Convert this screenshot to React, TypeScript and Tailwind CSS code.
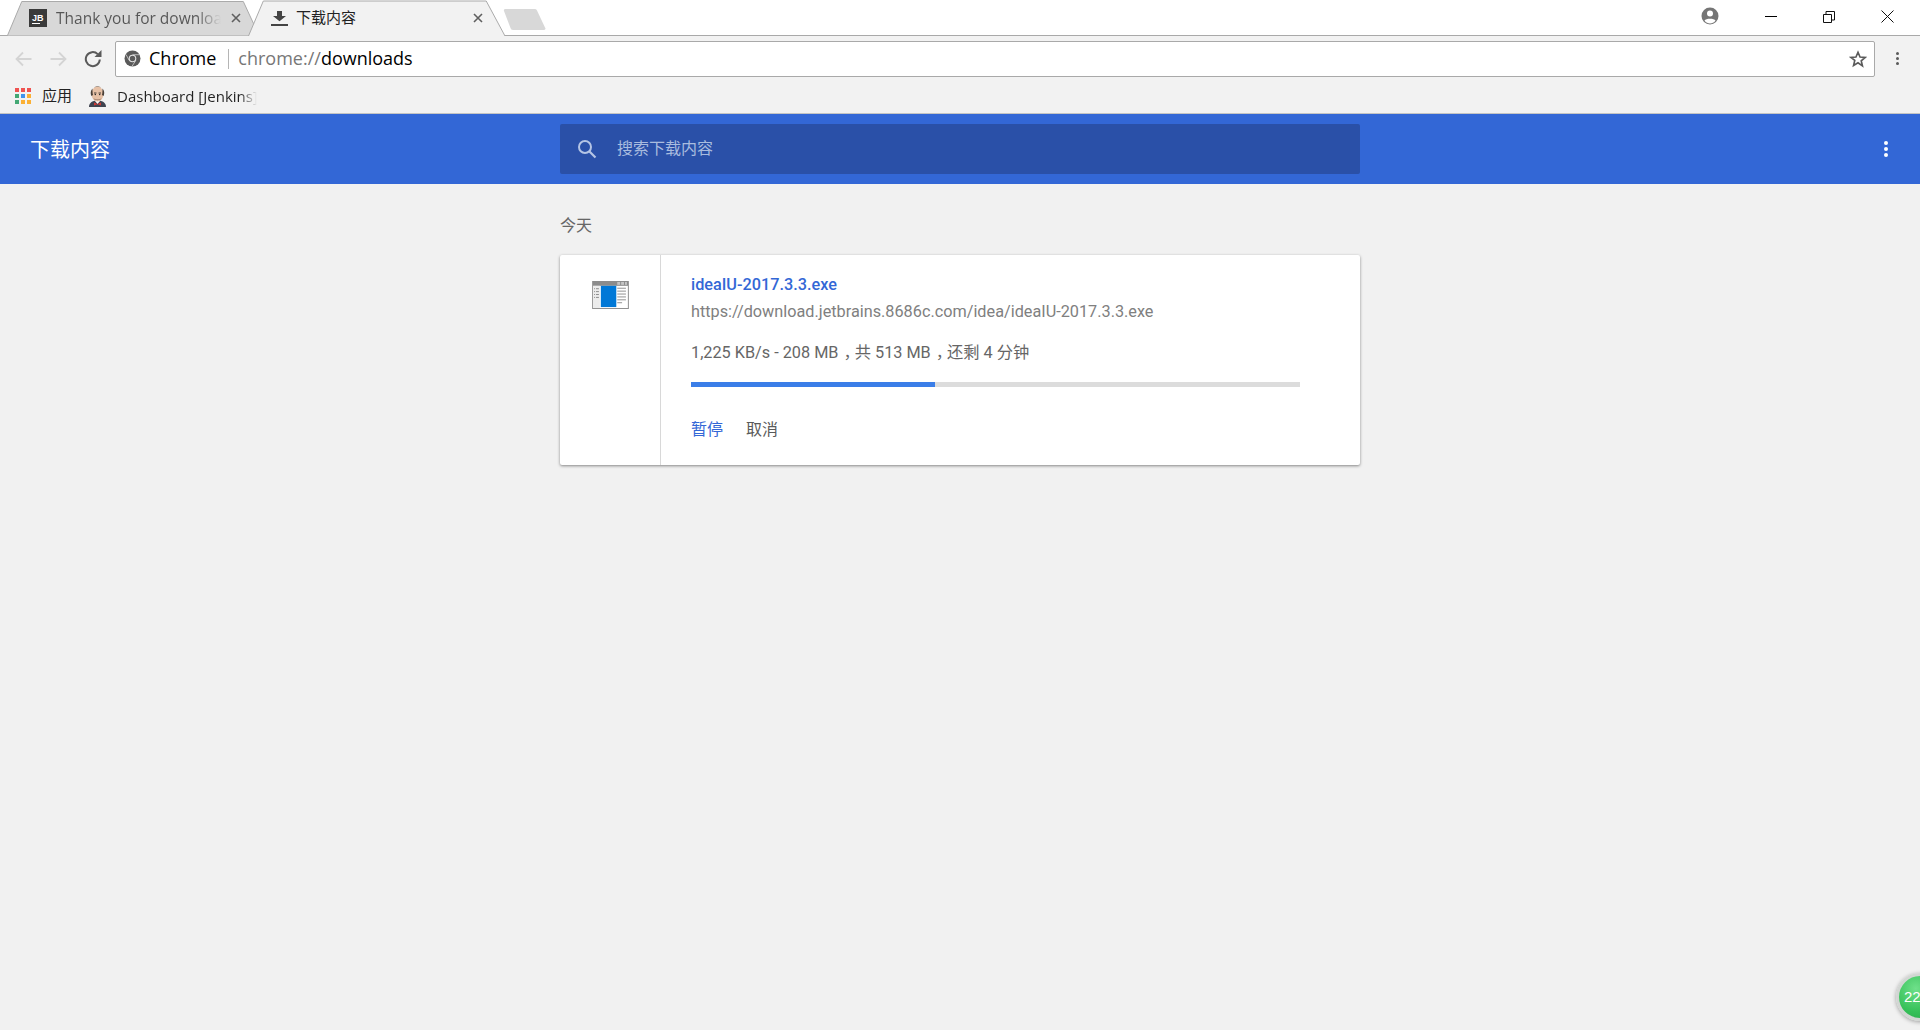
const cjk = "font-['Roboto','Noto_Sans_CJK_SC',sans-serif]";

function TabShape({ fill, stroke, d }: { fill: string; stroke: string; d: string }) {
  return (
    <svg className="absolute inset-0 h-full w-full" viewBox="0 0 260 36" preserveAspectRatio="none">
      <path d={d} fill={fill} stroke={stroke} strokeWidth="1" />
    </svg>
  );
}

function CloseIcon() {
  return (
    <svg width="10" height="10" viewBox="0 0 10 10" className="shrink-0">
      <path d="M1 1l8 8M9 1l-8 8" stroke="#5f5f5f" strokeWidth="1.600" />
    </svg>
  );
}

function JenkinsIcon() {
  return (
    <svg width="19" height="21" viewBox="0 0 19 21">
      <path d="M1 21c0-4 3-6.500 8.500-6.500S18 17 18 21z" fill="#3f4450" />
      <path d="M7 15l2.500 3L12 15z" fill="#fff" />
      <path d="M6 16.500l3.500 1.500 3.500-1.500v3l-3.500-1.200L6 19.500z" fill="#cf3a34" />
      <ellipse cx="9.500" cy="8" rx="6" ry="7.500" fill="#e7c1a6" />
      <path d="M3.500 10C2 7 3 4 4.500 2.500 4.500 5 4.500 7 5 9zM15.500 10c1.500-3 .5-6-1-7.500 0 2.500 0 4.500-.5 6.500z" fill="#4a4038" />
      <path d="M6 1.500C7.500.3 11.500.3 13 1.500 11 .9 8 .9 6 1.500z" fill="#6a5c50" />
      <path d="M5.500 12c2 2 6 2 8 0-.5 3-7.500 3-8 0z" fill="#8a6a58" />
      <path d="M6 7h2.500M10.500 7H13" stroke="#4a4038" strokeWidth="1" />
      <circle cx="7.300" cy="8.500" r="0.700" fill="#222" />
      <circle cx="11.700" cy="8.500" r="0.700" fill="#222" />
    </svg>
  );
}

function FileIcon() {
  return (
    <svg width="37" height="28" viewBox="0 0 38 29">
      <rect x="0" y="0" width="38" height="29" fill="#8c8c8c" />
      <rect x="1" y="5" width="36" height="23" fill="#fff" />
      <rect x="1" y="5" width="7" height="23" fill="#ececec" />
      <rect x="26" y="1" width="3" height="3" fill="#c4c4c4" />
      <rect x="30" y="1" width="3" height="3" fill="#c4c4c4" />
      <rect x="34" y="1" width="2" height="3" fill="#c4c4c4" />
      <rect x="9" y="5" width="16" height="22" fill="#0078d7" />
      <path d="M2 8h1M4 8h3M2 11h1M4 11h3M2 14h1M4 14h3M2 17h1M4 17h3" stroke="#8a8a8a" strokeWidth="1" />
      <path d="M26 7.500h9M26 10.500h9M26 13.500h9M26 16.500h9M26 19.500h9M26 22.500h5" stroke="#8f8f8f" strokeWidth="1" />
    </svg>
  );
}

export default function App() {
  return (
    <div className={`flex h-[1030px] w-full flex-col overflow-hidden bg-[#f1f1f1] ${cjk}`}>
      {/* tab strip */}
      <div className="flex h-[36px] shrink-0 items-stretch border-b border-[#a9a9a9] bg-white pl-[7px]">
        <div className="relative -mb-px flex w-[256px] items-center pl-[22px] pr-[20px]">
          <TabShape fill="#d8d8d8" stroke="#a9a9a9" d="M0.500 35.500L15 1.500H240L256 35.500" />
          <div className="relative flex h-[18px] w-[18px] shrink-0 flex-col justify-center bg-[#3a3a3a] pl-[3px] font-['Liberation_Sans',sans-serif] text-[9px] font-bold leading-[10px] text-white">
            JB
            <div className="h-px w-[8px] bg-white" />
          </div>
          <span className="relative ml-[9px] mt-[2px] w-[165px] overflow-hidden whitespace-nowrap bg-gradient-to-r from-[#555] from-85% to-transparent bg-clip-text font-['Open_Sans',sans-serif] text-[15.500px] text-transparent">
            Thank you for downloa
          </span>
          <span className="relative ml-[10px]"><CloseIcon /></span>
        </div>
        <div className="relative z-10 -mb-px -ml-[15px] flex w-[257px] items-center pl-[23px]">
          <TabShape fill="#f2f2f2" stroke="#a9a9a9" d="M0.500 36L15.500 1H241L260 36" />
          <svg width="17" height="15" viewBox="0 0 17 15" className="relative shrink-0">
            <path d="M6 0h5v6h4l-6.500 6L2 6h4z" fill="#444" transform="translate(0 -0.500) scale(1 0.900)" />
            <rect x="0" y="13" width="17" height="2" fill="#444" />
          </svg>
          <span className="relative ml-[8px] w-[174px] whitespace-nowrap text-[15px] text-[#222]">下载内容</span>
          <span className="relative ml-[3px]"><CloseIcon /></span>
        </div>
        <svg width="46" height="24" viewBox="0 0 46 24" className="mt-[8px] -ml-[3px] shrink-0">
          <path d="M3 1h30a2 2 0 0 1 2 1.500l8 17a1.500 1.500 0 0 1-1.500 2.500H11a2.500 2.500 0 0 1-2.500-2L2 3a1.500 1.500 0 0 1 1-2z" fill="#d8d8d8" />
        </svg>
        <div className="ml-auto flex items-center pb-[2px] pr-[3px]">
          <svg width="18" height="18" viewBox="0 0 18 18" className="mb-[2px] mr-[23px]">
            <circle cx="9" cy="9" r="8.500" fill="#757575" />
            <circle cx="9" cy="6.500" r="3" fill="#fff" />
            <path d="M3.500 13.500C5 11 13 11 14.500 13.500 13 15.700 11 16.500 9 16.500S5 15.700 3.500 13.500z" fill="#fff" />
          </svg>
          <div className="flex h-full w-[58px] items-center justify-center">
            <div className="h-px w-[12px] bg-black" />
          </div>
          <div className="flex h-full w-[58px] items-center justify-center">
            <svg width="12" height="12" viewBox="0 0 12 12">
              <path d="M.5 3.500h8v8h-8zM3 3.500V.5h8.500V9h-3" fill="none" stroke="#111" />
            </svg>
          </div>
          <div className="flex h-full w-[59px] items-center justify-center">
            <svg width="13" height="13" viewBox="0 0 13 13">
              <path d="M.5.500l12 12M12.500.5l-12 12" stroke="#111" />
            </svg>
          </div>
        </div>
      </div>

      {/* toolbar */}
      <div className="flex h-[45px] shrink-0 items-center bg-[#f2f2f2] pl-[15px]">
        <svg width="17" height="16" viewBox="0 0 17 16" className="mr-[18px]">
          <path d="M16.500 8H2M8 1.500L1.500 8 8 14.500" fill="none" stroke="#d4d4d4" strokeWidth="1.800" />
        </svg>
        <svg width="17" height="16" viewBox="0 0 17 16" className="mr-[17px]">
          <path d="M.5 8H15M9 1.500L15.500 8 9 14.500" fill="none" stroke="#d4d4d4" strokeWidth="1.800" />
        </svg>
        <svg width="18" height="18" viewBox="0 0 18 18">
          <path d="M15.800 9.500a7 7 0 1 1-2.100-5.400" fill="none" stroke="#5a5a5a" strokeWidth="2" />
          <path d="M10.500 7h7V0z" fill="#5a5a5a" />
        </svg>
        <div className="ml-[13px] flex h-[36px] w-[1760px] items-center rounded-[2px] border border-[#a9a9a9] bg-white pl-[8px] pr-[7px]">
          <svg width="17" height="17" viewBox="0 0 17 17" className="shrink-0">
            <circle cx="8.500" cy="8.500" r="8" fill="#5a5a5a" />
            <circle cx="8.500" cy="8.500" r="3.800" fill="#e4e4e4" />
            <circle cx="8.500" cy="8.500" r="2.700" fill="#5a5a5a" />
            <path d="M8.500 4.700h7M5.200 10.400L2 4.500M11.800 10.400L8 16.300" stroke="#e4e4e4" strokeWidth="0.700" />
          </svg>
          <span className="mb-[2px] ml-[8px] font-['Open_Sans',sans-serif] text-[18px] leading-none text-black">Chrome</span>
          <div className="ml-[12px] h-[20px] w-px bg-[#b5b5b5]" />
          <span className="mb-[2px] ml-[9px] font-['Open_Sans',sans-serif] text-[18px] leading-none text-[#777]">
            chrome://<span className="text-black">downloads</span>
          </span>
          <svg width="18" height="18" viewBox="0 0 24 24" className="ml-auto">
            <path d="M12 3l2.700 6.300 6.800.6-5.200 4.500 1.600 6.700L12 17l-5.900 3.600 1.600-6.700L2.500 9.900l6.800-.6z" fill="none" stroke="#5a5a5a" strokeWidth="2.200" />
          </svg>
        </div>
        <div className="ml-[21px] flex flex-col gap-[2px]">
          <div className="h-[3px] w-[3px] rounded-full bg-[#5a5a5a]" />
          <div className="h-[3px] w-[3px] rounded-full bg-[#5a5a5a]" />
          <div className="h-[3px] w-[3px] rounded-full bg-[#5a5a5a]" />
        </div>
      </div>

      {/* bookmarks */}
      <div className="flex h-[32px] shrink-0 items-center bg-[#f2f2f2] pb-[2px] pl-[15px]">
        <div className="grid grid-cols-3 gap-[2px]">
          {["#ef5350", "#ef5350", "#ef5350", "#43a874", "#3f93ee", "#fbb034", "#43a874", "#fbb034", "#fbb034"].map((c, i) => (
            <div key={i} className="h-[4px] w-[4px]" style={{ backgroundColor: c }} />
          ))}
        </div>
        <span className="ml-[11px] text-[15px] text-[#222]">应用</span>
        <span className="ml-[16px] flex"><JenkinsIcon /></span>
        <span className="ml-[10px] w-[140px] overflow-hidden whitespace-nowrap bg-gradient-to-r from-[#222] from-88% to-transparent bg-clip-text font-['Open_Sans',sans-serif] text-[15px] text-transparent">
          Dashboard [Jenkins]
        </span>
      </div>

      {/* page header */}
      <div className="flex h-[71px] shrink-0 items-center border-t border-[#c4c4c4] bg-[#3367d6]">
        <div className="w-[560px] shrink-0 pl-[30px] pt-[2px] text-[20px] text-white">下载内容</div>
        <div className="flex h-[50px] w-[800px] items-center rounded-[2px] bg-[#2a50a8] pl-[17px]">
          <svg width="20" height="20" viewBox="0 0 20 20">
            <circle cx="8" cy="8" r="6" fill="none" stroke="#b5c5e5" strokeWidth="2" />
            <path d="M12.500 12.500l6 6" stroke="#b5c5e5" strokeWidth="2.200" />
          </svg>
          <span className="ml-[20px] text-[16px] text-[#a9bcdf]">搜索下载内容</span>
        </div>
        <div className="ml-[524px] flex flex-col gap-[2px]">
          <div className="h-[4px] w-[4px] rounded-full bg-white" />
          <div className="h-[4px] w-[4px] rounded-full bg-white" />
          <div className="h-[4px] w-[4px] rounded-full bg-white" />
        </div>
      </div>

      {/* downloads list */}
      <div className="relative flex-1">
        <div className="mx-auto w-[800px]">
          <div className="pt-[31px] text-[16px] leading-[22px] text-[#666]">今天</div>
          <div className="mt-[18px] flex h-[210px] rounded-[2px] bg-white shadow-[0_1px_3px_rgba(0,0,0,0.45)]">
            <div className="flex w-[101px] shrink-0 justify-center border-r border-[#d8d8d8] pt-[26px]">
              <FileIcon />
            </div>
            <div className="flex-1 pl-[30px]">
              <div className="mt-[20px] text-[16.250px] leading-[20px] font-medium text-[#3367d6]">ideaIU-2017.3.3.exe</div>
              <div className="mt-[7px] text-[16.250px] leading-[20px] text-[#808080]">https://download.jetbrains.8686c.com/idea/ideaIU-2017.3.3.exe</div>
              <div className="mt-[21px] text-[16.250px] leading-[20px] text-[#666]">
                1,225 KB/s - 208 MB<span className="ml-[5px] tracking-[-5px]">，</span>共 513 MB<span className="ml-[5px] tracking-[-5px]">，</span>还剩 4 分钟
              </div>
              <div className="mt-[19px] h-[5px] w-[609px] bg-[#dcdcdc]">
                <div className="h-full bg-[#3b7ee8]" style={{ width: "40.06%" }} />
              </div>
              <div className="mt-[32px] flex gap-[23px] text-[16px] leading-[22px]">
                <span className="text-[#3367d6]">暂停</span>
                <span className="text-[#5a5a5a]">取消</span>
              </div>
            </div>
          </div>
        </div>
        {/* floating badge */}
        <div className="absolute left-[1896px] top-[789px] flex h-[48px] w-[48px] items-center rounded-full border-[3px] border-[#d2d6d3] bg-[radial-gradient(circle_at_40%_30%,#6fe08a,#35c058_60%,#2aa54a)] pl-[5px] shadow-[0_1px_4px_rgba(0,0,0,0.35)]">
          <span className="font-['Liberation_Sans',sans-serif] text-[15px] text-white">22</span>
        </div>
      </div>
    </div>
  );
}
